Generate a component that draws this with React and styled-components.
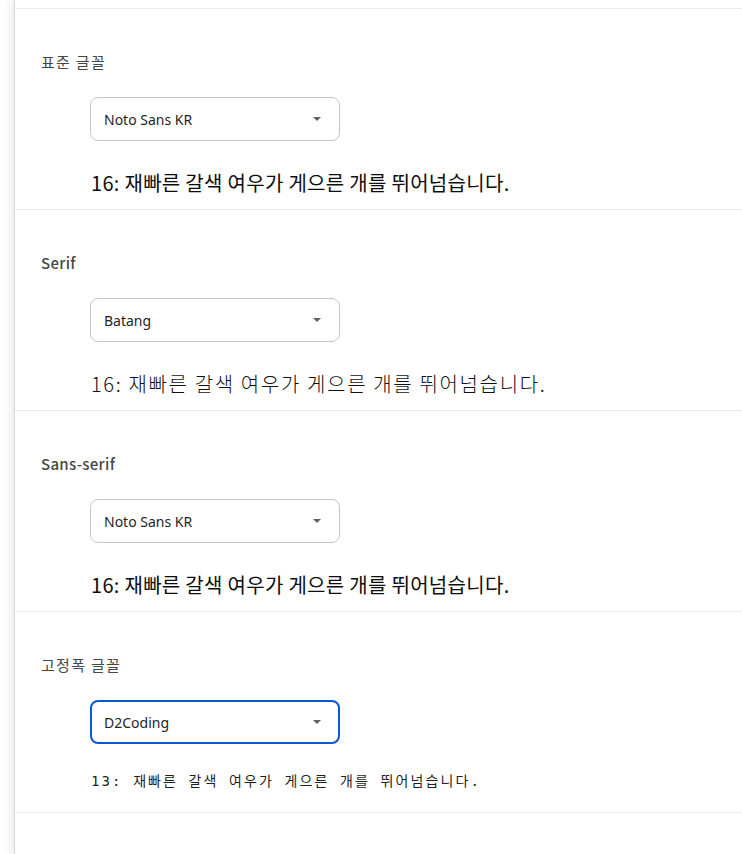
import React from "react";
import styled, { createGlobalStyle } from "styled-components";

const Global = createGlobalStyle`
  html, body { margin: 0; padding: 0; background: #ffffff; }
  body { font-family: "Noto Sans CJK KR", "Noto Sans", sans-serif; overflow: hidden; }
`;

const Page = styled.div`
  padding-left: 15px;
  min-height: 854px;
  overflow: hidden;
`;

const Card = styled.div`
  width: calc(100% + 20px);
  min-height: 854px;
  background: #ffffff;
  border-left: 1px solid #d6d6d6;
  box-shadow: -3px 0 10px rgba(0, 0, 0, 0.09);
  margin-left: -1px;
`;

const TopEdge = styled.div`
  height: 8px;
  border-bottom: 1px solid #e9e9e9;
`;

const Section = styled.section`
  box-sizing: border-box;
  height: 201px;
  padding: 43px 0 0 26px;
  border-bottom: 1px solid #e9e9e9;
`;

const Label = styled.div`
  font-family: "Noto Sans CJK KR", sans-serif;
  font-size: 15px;
  line-height: 20px;
  color: #474747;
  font-weight: ${(p) => (p.$latin ? 500 : 400)};
  letter-spacing: ${(p) => (p.$latin ? "0.3px" : "1.3px")};
`;

const Select = styled.div`
  box-sizing: border-box;
  margin: 25px 0 0 49px;
  width: 250px;
  height: 44px;
  border: ${(p) => (p.$focused ? "2px solid #0b57d0" : "1px solid #c7c7c7")};
  border-radius: 8px;
  padding: 0 ${(p) => (p.$focused ? "12px" : "13px")};
  display: flex;
  align-items: center;
  justify-content: space-between;
  background: #ffffff;
`;

const SelectText = styled.span`
  font-family: "Noto Sans", Roboto, sans-serif;
  font-size: 14px;
  color: #1f1f1f;
`;

const Arrow = styled.span`
  width: 0;
  height: 0;
  border-left: 4px solid transparent;
  border-right: 4px solid transparent;
  border-top: 4px solid #5f5f5f;
  margin-right: 5px;
`;

const previewStyles = {
  sans: `font-family: "Noto Sans CJK KR", sans-serif; font-size: 20px; line-height: 27px; font-weight: 400; letter-spacing: 0.3px; color: #0d0d0d;`,
  serif: `font-family: "Noto Sans CJK KR", serif; font-size: 20px; line-height: 27px; font-weight: 300; letter-spacing: 1.65px; color: #111;`,
  mono: `font-family: "DejaVu Sans Mono", "Noto Sans CJK KR", monospace; font-size: 14px; line-height: 19.5px; font-weight: 400; letter-spacing: 2.1px;`,
};

const Preview = styled.div`
  margin: 28px 0 0 50px;
  color: #1f1f1f;
  white-space: nowrap;
  ${(p) => previewStyles[p.$kind]}
`;

const sample = "재빠른 갈색 여우가 게으른 개를 뛰어넘습니다.";

const fonts = [
  { label: "표준 글꼴", latin: false, value: "Noto Sans KR", size: 16, kind: "sans" },
  { label: "Serif", latin: true, value: "Batang", size: 16, kind: "serif" },
  { label: "Sans-serif", latin: true, value: "Noto Sans KR", size: 16, kind: "sans" },
  { label: "고정폭 글꼴", latin: false, value: "D2Coding", size: 13, kind: "mono", focused: true },
];

export default function App() {
  return (
    <Page>
      <Global />
      <Card>
        <TopEdge />
        {fonts.map((f) => (
          <Section key={f.label}>
            <Label $latin={f.latin}>{f.label}</Label>
            <Select $focused={f.focused}>
              <SelectText>{f.value}</SelectText>
              <Arrow />
            </Select>
            <Preview $kind={f.kind}>
              {f.size}: {sample}
            </Preview>
          </Section>
        ))}
      </Card>
    </Page>
  );
}
